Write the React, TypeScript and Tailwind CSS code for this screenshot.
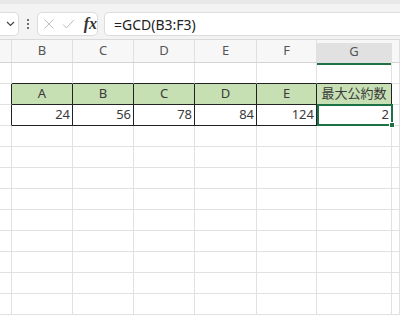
import React from 'react';

const cols = [
  { key: 'A', w: 'w-[12px]' },
  { key: 'B', w: 'w-[61px]' },
  { key: 'C', w: 'w-[61px]' },
  { key: 'D', w: 'w-[61px]' },
  { key: 'E', w: 'w-[62px]' },
  { key: 'F', w: 'w-[60px]' },
  { key: 'G', w: 'w-[75px]' },
  { key: 'H', w: 'flex-1' },
];

const heads = ['A', 'B', 'C', 'D', 'E', '最大公約数'];
const values = ['24', '56', '78', '84', '124', '2'];

const Cell: React.FC<{ w: string; className?: string; children?: React.ReactNode }> = ({ w, className = '', children }) => (
  <div className={`${w} shrink-0 h-full border-r border-b ${className}`}>{children}</div>
);

export default function App() {
  const empty = Array.from({ length: 9 });

  return (
    <div className="w-[400px] h-[321px] overflow-hidden bg-white font-['Noto_Sans','Noto_Sans_CJK_JP',sans-serif] text-[#3a3a3a]">
      {/* formula bar */}
      <div className="h-[4px] bg-[#e8e8e8]" />
      <div className="h-[36px] bg-[#f3f3f3] flex pt-[8px] pb-[4px] border-b border-[#dadada]">
        <div className="w-[19px] h-[24px] bg-white border border-l-0 border-[#dcdcdc] rounded-r-[5px] flex items-center justify-end pr-[3px]">
          <svg width="9" height="6" viewBox="0 0 9 6" fill="none" stroke="#444" strokeWidth="1.2">
            <path d="M1 1l3.5 3.5L8 1" />
          </svg>
        </div>
        <div className="w-[18px] flex flex-col items-center justify-center gap-[2px]">
          <span className="w-[2px] h-[2px] bg-[#444] rounded-full" />
          <span className="w-[2px] h-[2px] bg-[#444] rounded-full" />
          <span className="w-[2px] h-[2px] bg-[#444] rounded-full" />
        </div>
        <div className="w-[61px] h-[24px] bg-white border border-[#dcdcdc] rounded-[5px] flex items-center pl-[5px]">
          <svg width="12" height="12" viewBox="0 0 12 12" fill="none" stroke="#b9b9b9" strokeWidth="1">
            <path d="M1.5 1.5l9 9M10.5 1.5l-9 9" />
          </svg>
          <svg className="ml-[7px]" width="13" height="12" viewBox="0 0 13 12" fill="none" stroke="#b9b9b9" strokeWidth="1">
            <path d="M1 6.5l3.5 3.5L12 2" />
          </svg>
          <span className="ml-[9px] font-['Liberation_Serif',serif] italic font-semibold text-[16px] leading-none text-[#333]">fx</span>
        </div>
        <div className="ml-[6px] flex-1 h-[24px] bg-white border border-r-0 border-[#dcdcdc] rounded-l-[5px] flex items-center pl-[9px] text-[14px] text-[#222]">
          =GCD(B3:F3)
        </div>
      </div>

      {/* column headers */}
      <div className="h-[23px] bg-[#f7f7f7] flex border-b border-[#d4d4d4]">
        {cols.map((c) => (
          <div
            key={c.key}
            className={`${c.w} shrink-0 h-full border-r border-[#e0e0e0] flex items-end justify-center pb-[2px] text-[13px] text-[#555] ${
              c.key === 'G' ? 'bg-[#e1e1e1] border-b-2 border-b-[#1e7145] mt-[3px] text-[#1e6b45]' : ''
            }`}
          >
            {c.key === 'A' || c.key === 'H' ? '' : c.key}
          </div>
        ))}
      </div>

      {/* row 2 (empty, above table) */}
      <div className="h-[21px] flex">
        {cols.map((c, i) => (
          <Cell
            key={c.key}
            w={c.w}
            className={`border-r-[#e1e1e1] ${i >= 1 && i <= 6 ? 'border-b-[#222]' : 'border-b-[#e1e1e1]'}`}
          />
        ))}
      </div>

      {/* table header */}
      <div className="h-[21px] flex">
        {cols.map((c, i) => {
          const inTable = i >= 1 && i <= 6;
          return (
            <Cell
              key={c.key}
              w={c.w}
              className={`${i <= 6 ? 'border-r-[#222]' : 'border-r-[#e1e1e1]'} ${inTable ? 'border-b-[#222] bg-[#c6e0b4]' : 'border-b-[#e1e1e1]'} flex items-center justify-center text-[13px]`}
            >
              {inTable ? heads[i - 1] : null}
            </Cell>
          );
        })}
      </div>

      {/* table data */}
      <div className="h-[21px] flex relative">
        {cols.map((c, i) => {
          const inTable = i >= 1 && i <= 6;
          return (
            <Cell
              key={c.key}
              w={c.w}
              className={`${i <= 6 ? 'border-r-[#222]' : 'border-r-[#e1e1e1]'} ${inTable ? 'border-b-[#222]' : 'border-b-[#e1e1e1]'} flex items-center justify-end pr-[2px] text-[13px]`}
            >
              {inTable ? values[i - 1] : null}
            </Cell>
          );
        })}
        {/* selection on G4 */}
        <div className="absolute left-[317px] top-[-1px] w-[76px] h-[22px] border-2 border-[#1e7145] pointer-events-none" />
        <div className="absolute left-[389px] top-[17px] w-[6px] h-[6px] bg-[#1e7145] border border-white" />
      </div>

      {/* empty rows */}
      {empty.map((_, r) => (
        <div key={r} className="h-[21px] flex">
          {cols.map((c) => (
            <Cell key={c.key} w={c.w} className="border-r-[#e1e1e1] border-b-[#e1e1e1]" />
          ))}
        </div>
      ))}
    </div>
  );
}
